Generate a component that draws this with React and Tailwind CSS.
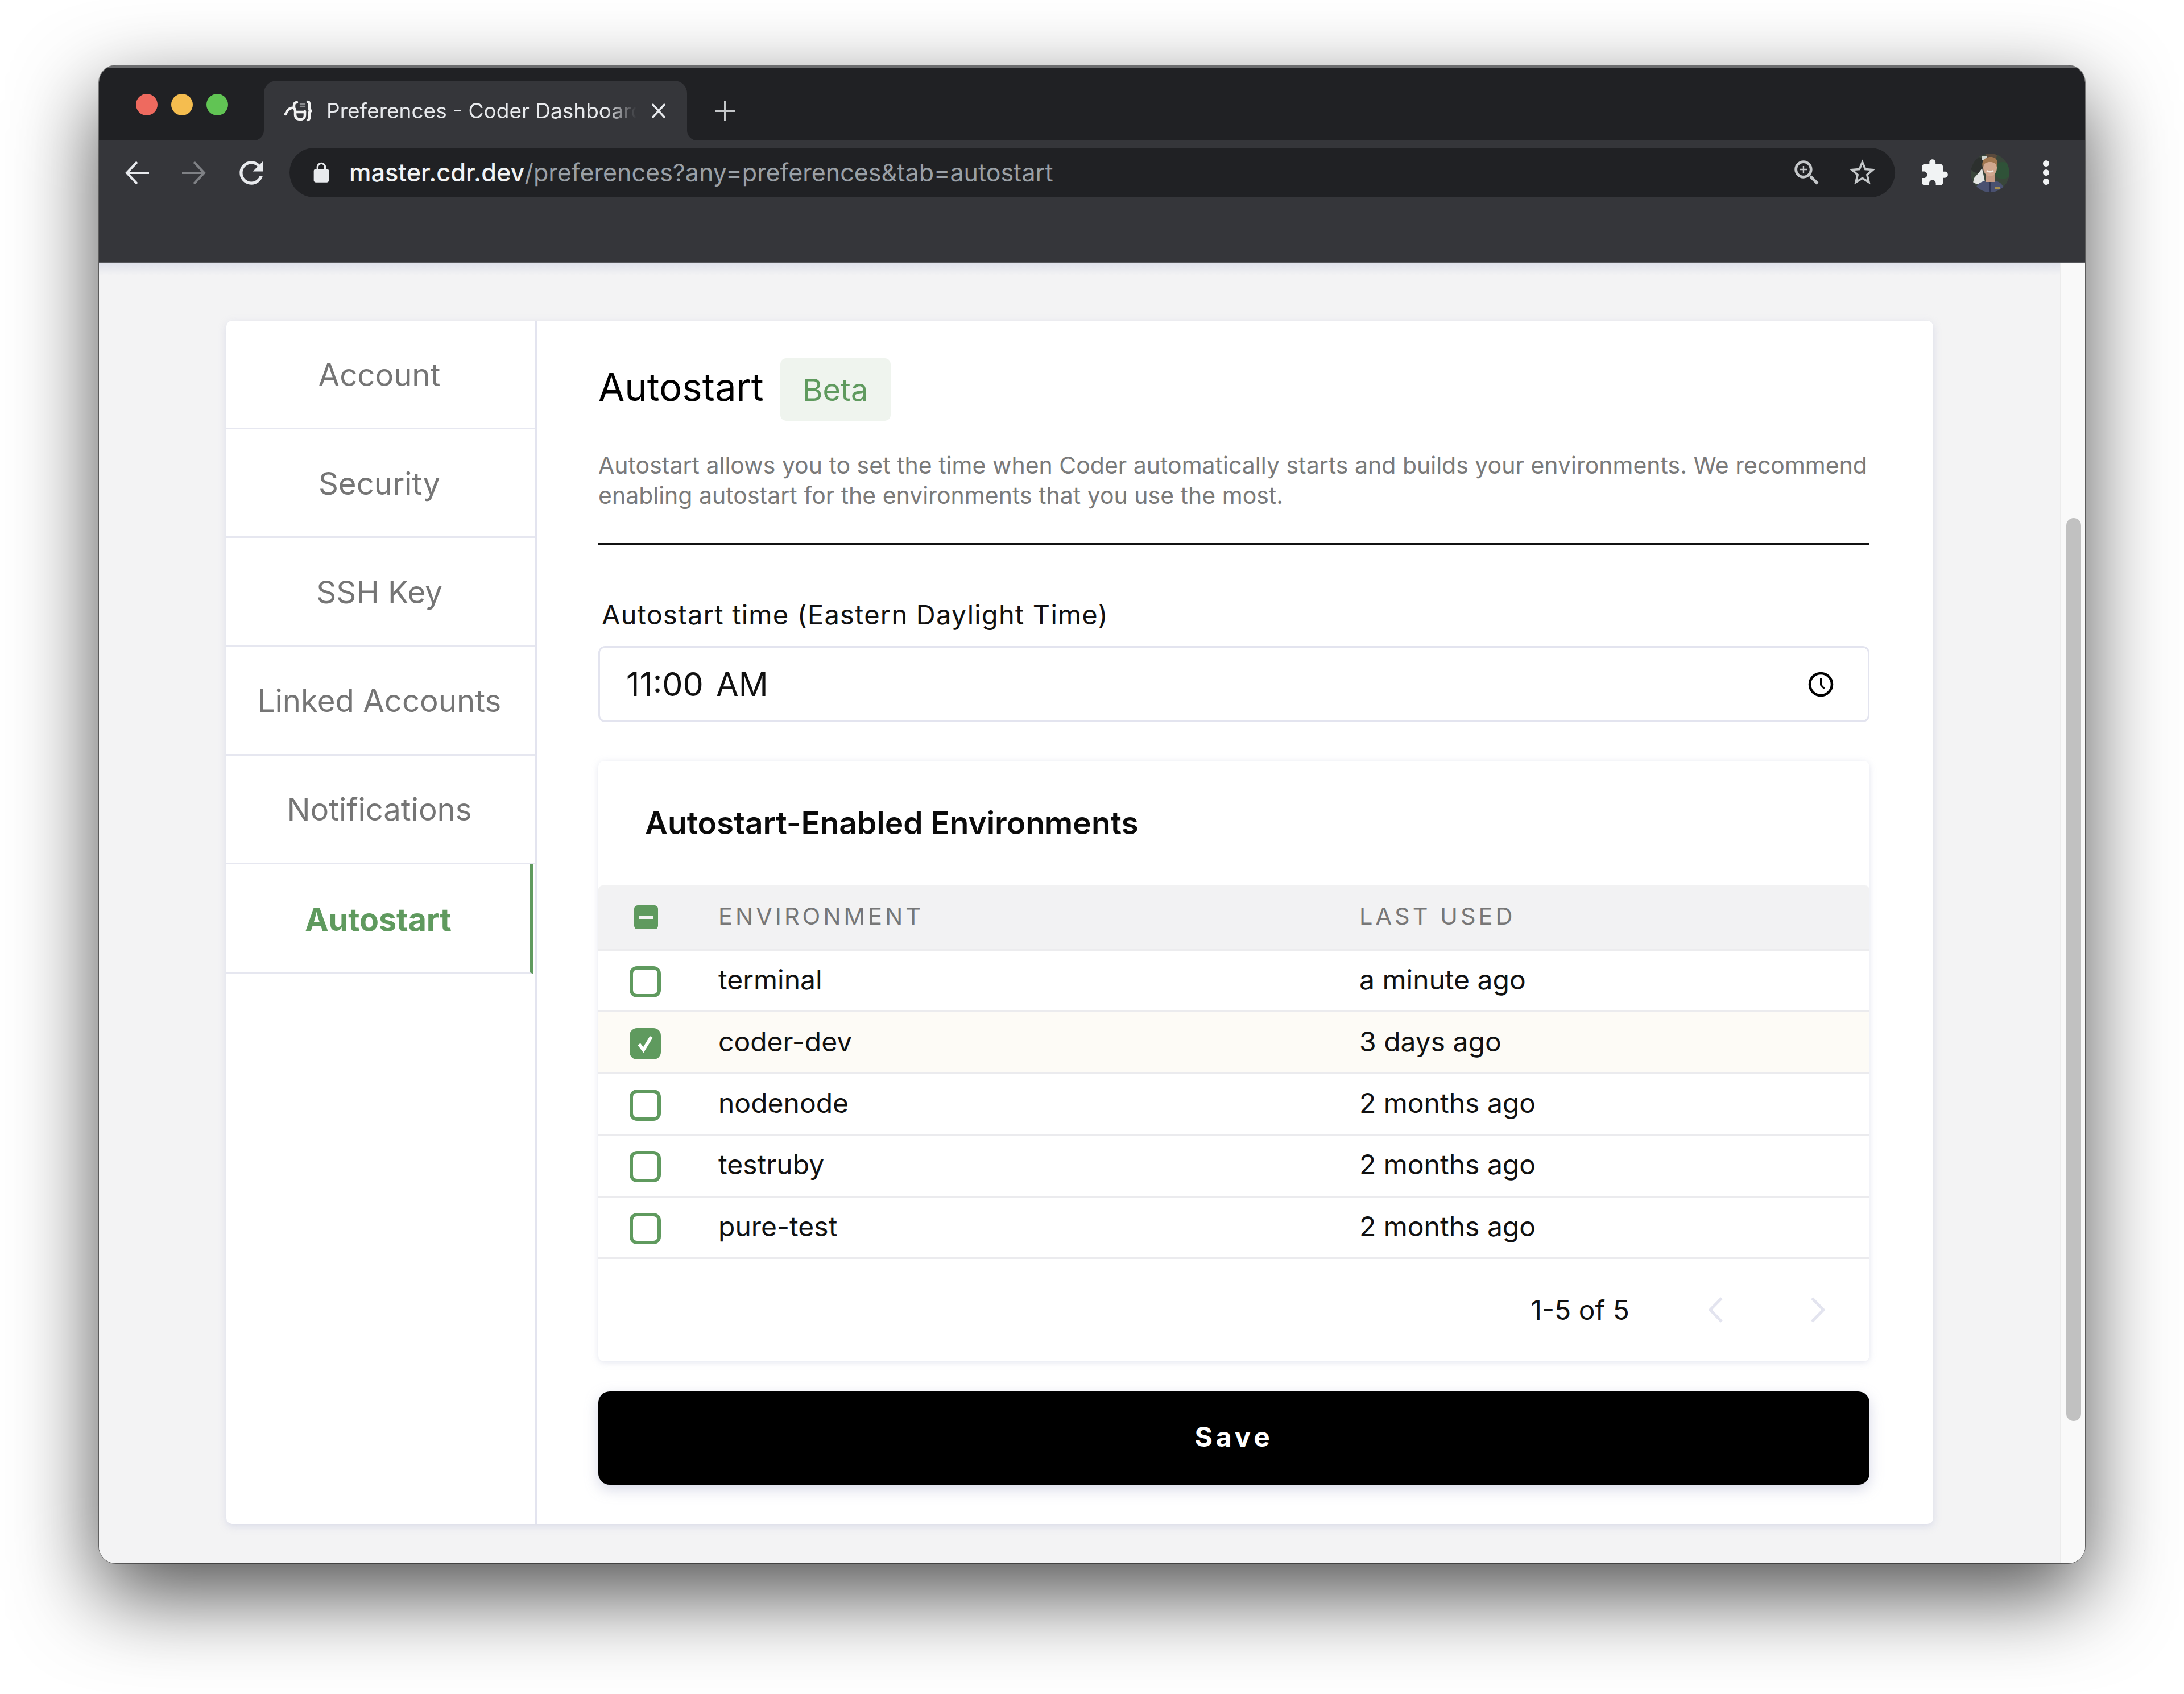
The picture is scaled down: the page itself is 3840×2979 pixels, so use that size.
import React from "react";

const rows = [
  { name: "terminal", used: "a minute ago" },
  { name: "coder-dev", used: "3 days ago", checked: true },
  { name: "nodenode", used: "2 months ago" },
  { name: "testruby", used: "2 months ago" },
  { name: "pure-test", used: "2 months ago" },
];

const tabs = ["Account", "Security", "SSH Key", "Linked Accounts", "Notifications"];

const Icon = ({ d, className }) => (
  <svg viewBox="0 0 24 24" className={className} fill="currentColor">
    <path d={d} />
  </svg>
);

const Avatar = () => (
  <svg viewBox="0 0 68 68" className="w-[68px] h-[68px] rounded-full shrink-0">
    <rect width="68" height="68" fill="#39463a" />
    <circle cx="56" cy="30" r="15" fill="#2f5238" />
    <circle cx="12" cy="20" r="14" fill="#2c302e" />
    <circle cx="36" cy="3" r="10" fill="#5a4a3c" />
    <path d="M14 34l6-8 3 14 2 10-13 4-8-3 2-8z" fill="#e2e5e2" />
    <rect x="20" y="4" width="8" height="7" fill="#cfd4cf" />
    <path d="M8 68c0-11 7-18 17-20l9 3 10-3c8 2 15 8 15 20z" fill="#4a5170" />
    <rect x="27" y="36" width="15" height="14" fill="#c49a84" />
    <ellipse cx="34" cy="25" rx="12" ry="15" fill="#d0a78e" />
    <path d="M21 24c-3-13 6-18 14-18s15 5 11 18c-1-7-6-9-12-9s-11 2-13 9z" fill="#a0764f" />
    <path d="M28 30c3 3 9 3 12 0" stroke="#f1e8e0" strokeWidth="2.5" fill="none" />
    <path d="M34 50v18" stroke="#2f3450" strokeWidth="2" />
    <rect x="42" y="59" width="9" height="4" fill="#a68f50" />
  </svg>
);

const CheckBox = ({ checked }) =>
  checked ? (
    <div className="w-[55px] h-[55px] ml-[55px] mt-[4px] rounded-[13px] bg-[#5f9a5e] flex items-center justify-center">
      <svg viewBox="0 0 30 30" className="w-[38px] h-[38px]" fill="none" stroke="#fff" strokeWidth="4.5">
        <path d="M6 16l6 8 11-18" />
      </svg>
    </div>
  ) : (
    <div className="w-[55px] h-[55px] ml-[55px] mt-[4px] rounded-[13px] border-[6px] border-[#5f9a5e] bg-white"></div>
  );

const App = () => {
  return (
    <div className="w-[3840px] h-[2979px] bg-white pt-[115px] pl-[174px] overflow-hidden font-['Inter',sans-serif]">
      <div className="w-[3492px] h-[2634px] rounded-[30px] flex flex-col overflow-hidden relative shadow-[0_0_0_1px_rgba(0,0,0,0.45),0_55px_150px_rgba(0,0,0,0.69)]">
        {/* tab strip */}
        <div className="h-[132px] shrink-0 bg-[#202124] border-t-[5px] border-[#6b6c6e] flex items-start">
          <div className="flex gap-[24px] ml-[65px] mt-[45px]">
            <div className="w-[38px] h-[38px] rounded-full bg-[#ee6a5f]"></div>
            <div className="w-[38px] h-[38px] rounded-full bg-[#f5bd4f]"></div>
            <div className="w-[38px] h-[38px] rounded-full bg-[#61c454]"></div>
          </div>
          <div className="relative ml-[63px] mt-[22px] w-[744px] h-[105px] bg-[#35363a] rounded-t-[22px] flex items-center pl-[35px] text-[#e8eaed]">
            <div className="absolute left-[-18px] bottom-0 w-[18px] h-[18px] bg-[#35363a]">
              <div className="w-full h-full bg-[#202124] rounded-br-[18px]"></div>
            </div>
            <div className="absolute right-[-18px] bottom-0 w-[18px] h-[18px] bg-[#35363a]">
              <div className="w-full h-full bg-[#202124] rounded-bl-[18px]"></div>
            </div>
            <svg viewBox="18 16 52 38" className="w-[52px] h-[38px] shrink-0" fill="none" stroke="#f1f1f1" strokeWidth="4.5" strokeLinecap="round">
              <path d="M21 41c3-7 8-12 14-11 4 1 3 7 3 11 0 6 3 9 9 9 5 0 8-3 8-7v-7" />
              <path d="M39 37h16" />
              <path d="M36 29v-4c0-3 2-5 5-5" />
              <path d="M60 19c2 0 3 2 3 5v7c0 2 1 4 4 4-3 0-4 2-4 4v7c0 3-1 5-3 5" />
              <path d="M47 23h8M47 27h8" stroke="#8a8b8e" strokeWidth="2.5" />
            </svg>
            <span className="ml-[23px] w-[545px] shrink-0 overflow-hidden whitespace-nowrap text-[37px] [mask-image:linear-gradient(to_right,black_90%,transparent)]">
              Preferences - Coder Dashboard
            </span>
            <svg viewBox="0 0 30 30" className="ml-[24px] w-[30px] h-[30px] shrink-0" stroke="#e8eaed" strokeWidth="3.5">
              <path d="M4 3l22 24M26 3L4 27" />
            </svg>
          </div>
          <svg viewBox="0 0 38 38" className="ml-[48px] mt-[56px] w-[38px] h-[38px] shrink-0" stroke="#c4c7c9" strokeWidth="4">
            <path d="M19 1v36M1 19h36" />
          </svg>
        </div>

        {/* toolbar */}
        <div className="h-[215px] shrink-0 bg-[#35363a] border-b-[2px] border-[#55565a] flex items-start pt-[13px] pl-[45px]">
          <div className="h-[87px] flex items-center text-[#e8eaed]">
            <svg viewBox="0 0 44 44" className="w-[44px] h-[44px] shrink-0" fill="none" stroke="currentColor" strokeWidth="4">
              <path d="M43 22H5M22 3L4 22l18 19" />
            </svg>
            <svg viewBox="0 0 44 44" className="w-[44px] h-[44px] shrink-0 ml-[56px] text-[#7f8185]" fill="none" stroke="currentColor" strokeWidth="4">
              <path d="M1 22h38M22 3l18 19-18 19" />
            </svg>
            <Icon className="w-[62px] h-[62px] shrink-0 ml-[48px]" d="M17.65 6.35A7.958 7.958 0 0012 4c-4.42 0-7.99 3.58-7.99 8s3.57 8 7.99 8c3.73 0 6.84-2.55 7.73-6h-2.08A5.99 5.99 0 0112 18c-3.31 0-6-2.69-6-6s2.69-6 6-6c1.66 0 3.14.69 4.22 1.78L13 11h7V4l-2.35 2.35z" />
            <div className="ml-[36px] w-[2823px] h-[87px] rounded-full bg-[#202124] flex items-center pl-[36px] pr-[30px]">
              <Icon className="w-[40px] h-[40px] shrink-0" d="M18 8h-1V6c0-2.76-2.24-5-5-5S7 3.24 7 6v2H6c-1.1 0-2 .9-2 2v10c0 1.1.9 2 2 2h12c1.1 0 2-.9 2-2V10c0-1.1-.9-2-2-2zM9 6c0-1.66 1.34-3 3-3s3 1.34 3 3v2H9V6z" />
              <div className="ml-[29px] flex-1 text-[43.3px] leading-[87px] whitespace-nowrap">
                <span className="text-[#f1f3f4] font-medium">master.cdr.dev</span>
                <span className="text-[#9aa0a6] text-[43px]">/preferences?any=preferences&amp;tab=autostart</span>
              </div>
              <svg viewBox="0 0 24 24" className="w-[58px] h-[58px] shrink-0 text-[#c4c7c9]" fill="currentColor">
                <path d="M15.5 14h-.79l-.28-.27C15.41 12.59 16 11.11 16 9.5 16 5.91 13.09 3 9.5 3S3 5.91 3 9.5 5.91 16 9.5 16c1.61 0 3.09-.59 4.23-1.57l.27.28v.79l5 4.99L20.49 19l-4.99-5zm-6 0C7.01 14 5 11.99 5 9.5S7.01 5 9.5 5 14 7.01 14 9.5 11.99 14 9.5 14z" />
                <path d="M12 10h-2v2H9v-2H7V9h2V7h1v2h2v1z" />
              </svg>
              <Icon className="w-[55px] h-[55px] shrink-0 ml-[41px] text-[#c4c7c9]" d="M22 9.24l-7.19-.62L12 2 9.19 8.63 2 9.24l5.46 4.73L5.82 21 12 17.27 18.18 21l-1.63-7.03L22 9.24zM12 15.4l-3.76 2.27 1-4.28-3.32-2.88 4.38-.38L12 6.1l1.71 4.04 4.38.38-3.32 2.88 1 4.28L12 15.4z" />
            </div>
            <Icon className="w-[52px] h-[52px] shrink-0 ml-[43px] text-[#f1f3f4]" d="M20.5 11H19V7c0-1.1-.9-2-2-2h-4V3.5C13 2.12 11.88 1 10.5 1S8 2.12 8 3.5V5H4c-1.1 0-1.99.9-1.99 2v3.8H3.5c1.49 0 2.7 1.21 2.7 2.7s-1.21 2.7-2.7 2.7H2V20c0 1.1.9 2 2 2h3.8v-1.5c0-1.49 1.21-2.7 2.7-2.7 1.49 0 2.7 1.21 2.7 2.7V22H17c1.1 0 2-.9 2-2v-4h1.5c1.38 0 2.5-1.12 2.5-2.5S21.88 11 20.5 11z" />
            <div className="ml-[38px]">
              <Avatar />
            </div>
            <div className="ml-[59px] flex flex-col gap-[5px]">
              <div className="w-[11px] h-[11px] rounded-full bg-[#f1f3f4]"></div>
              <div className="w-[11px] h-[11px] rounded-full bg-[#f1f3f4]"></div>
              <div className="w-[11px] h-[11px] rounded-full bg-[#f1f3f4]"></div>
            </div>
          </div>
        </div>

        {/* page */}
        <div className="flex-1 flex bg-[#f3f3f4] min-h-0">
          <div className="flex-1 pt-[102px] pl-[224px] pr-[223px] bg-[linear-gradient(to_bottom,#dfe1ea,#f3f3f4_22px)]">
            <div className="h-[2116px] bg-white rounded-[10px] flex shadow-[0_4px_14px_rgba(205,208,226,0.7)]">
              <div className="w-[546px] shrink-0 border-r-[3px] border-[#e3e4ef]">
                {tabs.map((t) => (
                  <div
                    key={t}
                    className="h-[191.2px] border-b-[3px] border-[#e6e7f0] flex items-center justify-center pr-[5px] pt-[3px] text-[54.5px] text-[#757575]"
                  >
                    {t}
                  </div>
                ))}
                <div className="h-[193px] border-b-[3px] border-[#e6e7f0] border-r-[6px] border-r-[#5f9a5e] mr-[3px] flex items-center justify-center pt-[3px] text-[55.5px] font-bold text-[#5f9a5e]">
                  Autostart
                </div>
              </div>

              <div className="flex-1 pl-[108px] pr-[112px] pt-[66px]">
                <div className="flex items-center gap-[29px]">
                  <h1 className="text-[67px] text-black h-[110px] leading-[102px]">Autostart</h1>
                  <span className="w-[194px] h-[110px] rounded-[10px] bg-[#eff4ee] text-[#5f9a5e] text-[54px] flex items-center justify-center">
                    Beta
                  </span>
                </div>
                <p className="mt-[52px] text-[41px] leading-[53px] text-[#7a7a7a]">
                  Autostart allows you to set the time when Coder automatically starts and builds your environments. We recommend enabling autostart for the environments that you use the most.
                </p>
                <div className="mt-[57px] h-[3px] bg-[#111]"></div>
                <div className="mt-[93px] ml-[6px] text-[47px] tracking-[1.2px] leading-[60px] text-[#111]">
                  Autostart time (Eastern Daylight Time)
                </div>
                <div className="mt-[25px] h-[134px] border-[3px] border-[#e3e4ef] rounded-[12px] flex items-center justify-between pl-[46px] pr-[60px]">
                  <span className="text-[57.5px] text-[#111] [word-spacing:6px]">11:00 AM</span>
                  <svg viewBox="0 0 45 45" className="w-[45px] h-[45px]" fill="none" stroke="#000">
                    <circle cx="22.5" cy="22.5" r="19.5" strokeWidth="4.5" />
                    <path d="M22.5 11v12.5l6 6.5" strokeWidth="3" />
                  </svg>
                </div>

                {/* environments table */}
                <div className="mt-[68px] h-[1056px] bg-white rounded-[10px] shadow-[0_2px_12px_rgba(215,218,232,0.7)]">
                  <div className="h-[219px] pl-[82px] flex items-center text-[55px] font-semibold text-[#0b0b0b]">
                    Autostart-Enabled Environments
                  </div>
                  <div className="h-[115px] grid grid-cols-[211px_1127px_1fr] items-center bg-[#f2f2f3] rounded-t-[8px] border-b-[3px] border-[#ececee] text-[41.5px] tracking-[0.12em] text-[#777]">
                    <div className="ml-[63px] w-[42px] h-[42px] rounded-[6px] bg-[#5f9a5e] flex items-center justify-center">
                      <div className="w-[24px] h-[6px] bg-[#f3f3f3]"></div>
                    </div>
                    <span className="pb-[4px]">ENVIRONMENT</span>
                    <span className="pb-[4px]">LAST USED</span>
                  </div>
                  {rows.map((r) => (
                    <div
                      key={r.name}
                      className={`h-[108.4px] grid grid-cols-[211px_1127px_1fr] items-center border-b-[3px] border-[#ebebee] text-[48px] text-[#111] ${r.checked ? "bg-[#fdfbf6]" : ""}`}
                    >
                      <CheckBox checked={r.checked} />
                      <span className="pb-[3px]">{r.name}</span>
                      <span className="pb-[3px]">{r.used}</span>
                    </div>
                  ))}
                  <div className="h-[180px] flex items-center justify-end text-[#111] text-[48px] pr-[77px]">
                    <span>1-5 of 5</span>
                    <svg viewBox="0 0 27 45" className="ml-[138px] w-[27px] h-[45px]" fill="none" stroke="#e3e4ef" strokeWidth="5">
                      <path d="M24 2L4 22.5 24 43" />
                    </svg>
                    <svg viewBox="0 0 27 45" className="ml-[153px] w-[27px] h-[45px]" fill="none" stroke="#e3e4ef" strokeWidth="5">
                      <path d="M3 2l20 20.5L3 43" />
                    </svg>
                  </div>
                </div>
                <button className="mt-[53px] w-full h-[164px] rounded-[20px] bg-black text-white text-[48px] font-bold tracking-[0.12em] pb-[4px] shadow-[0_8px_24px_rgba(205,208,226,0.8)]">
                  Save
                </button>
              </div>
            </div>
          </div>
          <div className="w-[44px] shrink-0 bg-[#f9f9f9] border-l-[2px] border-[#ececec] pl-[9px]">
            <div className="mt-[449px] w-[26px] h-[1588px] rounded-full bg-[#c1c1c1]"></div>
          </div>
        </div>
      </div>
    </div>
  );
};

export default App;
